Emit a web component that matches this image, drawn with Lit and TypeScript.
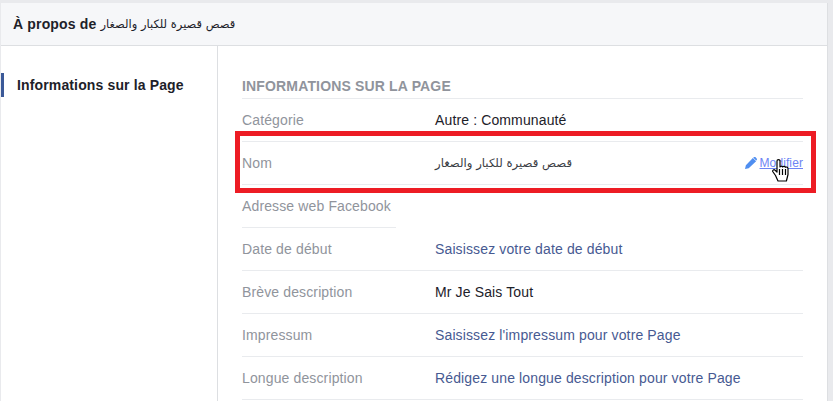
import { LitElement, html, css, TemplateResult } from "lit";
import { customElement } from "lit/decorators.js";

const PAGE_NAME = "قصص قصيرة للكبار والصغار";

interface InfoRow {
  label: string;
  value: string;
  kind: "plain" | "link" | "empty";
}

const ROWS_BELOW: InfoRow[] = [
  { label: "Date de début", value: "Saisissez votre date de début", kind: "link" },
  { label: "Brève description", value: "Mr Je Sais Tout", kind: "plain" },
  { label: "Impressum", value: "Saisissez l'impressum pour votre Page", kind: "link" },
  { label: "Longue description", value: "Rédigez une longue description pour votre Page", kind: "link" },
];

@customElement("app-root")
export class AppRoot extends LitElement {
  static styles = css`
    :host {
      display: block;
      width: 833px;
      height: 401px;
      overflow: hidden;
      position: relative;
      background: #e9eaed;
      font-family: "Liberation Sans", Arial, sans-serif;
      font-size: 14px;
      letter-spacing: 0.13px;
      color: #1d2129;
    }

    .panel {
      width: 826px;
      margin: 3px 0 0 1px;
      background: #fff;
      border-right: 1px solid #dddfe2;
    }

    .header {
      height: 42px;
      box-sizing: content-box;
      display: flex;
      align-items: center;
      gap: 4px;
      padding-left: 12px;
      background: #f6f7f9;
      border-bottom: 1px solid #dddfe2;
      font-weight: 700;
      letter-spacing: 0.16px;
    }

    .arabic {
      font-family: "DejaVu Sans", sans-serif;
      font-weight: 400;
      font-size: 11.5px;
      letter-spacing: 0;
    }

    .arabic.big {
      font-size: 11.7px;
      color: #3a3d44;
    }

    .body {
      display: flex;
      height: 355px;
    }

    .side {
      width: 216px;
      border-right: 1px solid #dddfe2;
      padding-top: 27px;
    }

    .side-item {
      height: 24px;
      line-height: 24px;
      padding-left: 13px;
      border-left: 3px solid #3b5998;
      font-weight: 700;
      letter-spacing: 0.14px;
    }

    .main {
      width: 561px;
      margin-left: 24px;
      padding-top: 28px;
    }

    .title {
      height: 24px;
      line-height: 24px;
      border-bottom: 1px solid #e9ebee;
      color: #90949c;
      font-weight: 700;
      letter-spacing: 0.16px;
    }

    .row {
      display: grid;
      grid-template-columns: 193px 1fr auto;
      align-items: center;
      height: 42px;
      border-bottom: 1px solid #e9ebee;
    }

    .label {
      color: #90949c;
    }

    .link {
      color: #475a92;
    }

    .edit {
      display: flex;
      align-items: center;
      gap: 3px;
      color: #6d84f4;
      font-size: 12px;
      letter-spacing: 0.1px;
      text-decoration: underline;
    }

    .edit svg {
      display: block;
    }

    .name-value {
      justify-self: start;
    }

    .row.short {
      width: 154px;
      display: block;
      line-height: 42px;
      white-space: nowrap;
    }

    .highlight {
      position: absolute;
      left: 235px;
      top: 131px;
      width: 581px;
      height: 62px;
      box-sizing: border-box;
      border: 5px solid #ed1c24;
      pointer-events: none;
    }

    .cursor {
      position: absolute;
      left: 772px;
      top: 159px;
    }
  `;

  private renderRow(row: InfoRow): TemplateResult {
    return html`
      <div class="row">
        <span class="label">${row.label}</span>
        <span class=${row.kind === "link" ? "link" : ""}>${row.value}</span>
      </div>
    `;
  }

  protected render(): TemplateResult {
    return html`
      <div class="panel">
        <div class="header">
          <span>À propos de</span>
          <span class="arabic" dir="rtl">${PAGE_NAME}</span>
        </div>
        <div class="body">
          <div class="side">
            <div class="side-item">Informations sur la Page</div>
          </div>
          <div class="main">
            <div class="title">INFORMATIONS SUR LA PAGE</div>
            ${this.renderRow({ label: "Catégorie", value: "Autre : Communauté", kind: "plain" })}
            <div class="row">
              <span class="label">Nom</span>
              <span class="arabic big name-value" dir="rtl">${PAGE_NAME}</span>
              <span class="edit">
                <svg width="12" height="12" viewBox="0 0 11 11">
                  <path fill="#4f8ef0" d="M0 11l.8-3.400L7.200.9l3 3-6.800 6.300zM8 .4C8.600-.1 9.200-.1 9.700.3l1 1c.4.500.4 1.100-.1 1.700l-.4.300-3-3z" />
                </svg>
                Modifier
              </span>
            </div>
            <div class="row short"><span class="label">Adresse web Facebook</span></div>
            ${ROWS_BELOW.map((row) => this.renderRow(row))}
          </div>
        </div>
      </div>
      <div class="highlight"></div>
      <svg class="cursor" width="18" height="23" viewBox="0 0 18 23">
        <path
          fill="#fff"
          stroke="#000"
          stroke-width="1.200"
          stroke-linejoin="round"
          d="M5 2c0-1.800 3-1.800 3 0v6c.6-1 2.200-1 2.700 0 .6-.8 2.200-.8 2.700.300.700-.600 2.600-.300 2.600 1.200v6l-1.600 6.500H6l-2.500-5.500L.7 12.500c-.4-1.500 1.300-2.300 2.400-1.300L5 13z"
        />
        <path stroke="#000" stroke-width="1.200" d="M7.500 10v6M10.500 10v6M13.500 10v6" />
      </svg>
    `;
  }
}

declare global {
  interface HTMLElementTagNameMap {
    "app-root": AppRoot;
  }
}
